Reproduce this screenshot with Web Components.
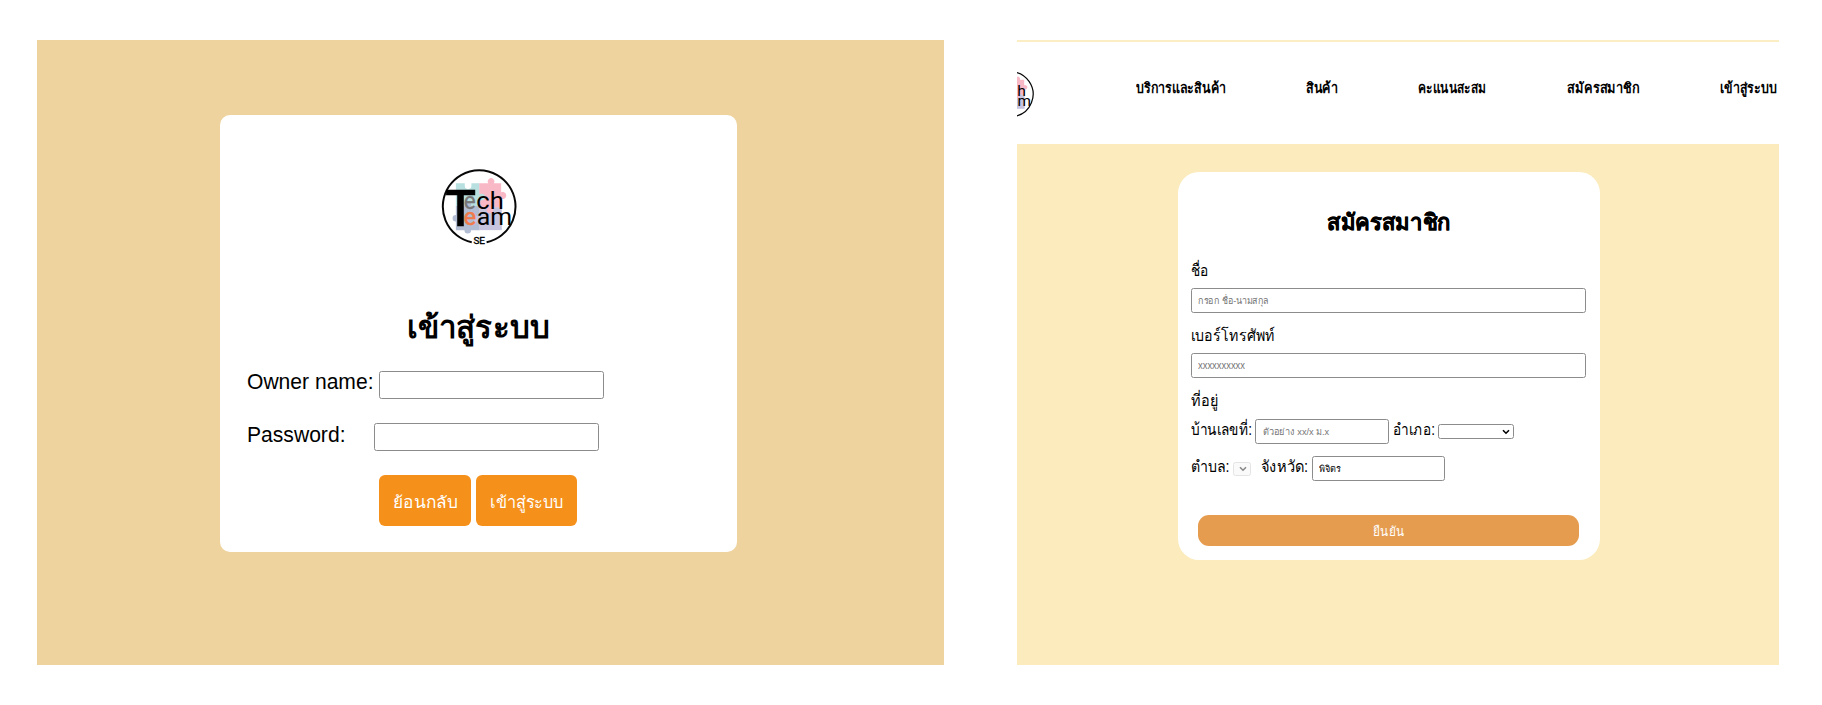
<!DOCTYPE html>
<html lang="th">
<head>
<meta charset="utf-8">
<title>Tech Team</title>
<style>
html,body{margin:0;padding:0;background:#fff}
body{width:1822px;height:705px;overflow:hidden;font-family:"Liberation Sans",sans-serif;color:#000}
</style>
</head>
<body>
<app-page></app-page>
<script>
const define = (name, html, ready) => {
  const tpl = document.createElement('template');
  tpl.innerHTML = html;
  customElements.define(name, class extends HTMLElement {
    constructor() {
      super();
      this.attachShadow({mode: 'open'}).appendChild(tpl.content.cloneNode(true));
    }
    connectedCallback() { if (ready) ready.call(this); }
  });
};

/* Text set to a given advance width: w = width, s = font size, t = top offset */
define('fit-text', `<style>
:host{display:block;flex:none;white-space:nowrap}
span{display:inline-block;vertical-align:top;line-height:inherit;transform-origin:0 0}
</style><span><slot></slot></span>`, function () {
  const w = +this.getAttribute('w'), s = +this.getAttribute('s');
  this.style.fontSize = s + 'px';
  this.style.lineHeight = s + 'px';
  this.style.height = s + 'px';
  this.style.width = w + 'px';
  this.style.marginTop = (this.getAttribute('t') || 0) + 'px';
  const span = this.shadowRoot.querySelector('span');
  const natural = span.getBoundingClientRect().width;
  if (natural) span.style.transform = `scaleX(${w / natural})`;
});

/* Outlined control: text field or select */
define('form-box', `<style>
:host{display:flex;flex:none;box-sizing:border-box;border:1px solid #8c8c8c;border-radius:2.5px;background:#fff;align-items:flex-start}
:host([disabled]){border-color:#e4e4e4;background:#fafafa;color:#888}
svg{display:none;margin:auto 3px auto auto;width:8px;height:6px}
:host([select]) svg{display:block}
</style><slot></slot><svg viewBox="0 0 8 6"><path d="M1 1.2 4 4.2 7 1.2" fill="none" stroke="currentColor" stroke-width="1.6"/></svg>`);

define('action-button', `<style>
:host{display:flex;flex:none;box-sizing:border-box;justify-content:center;color:#fff;background:var(--fill)}
</style><slot></slot>`);

define('team-logo', `<style>
:host{display:block;flex:none;font-weight:400}
svg{display:block;width:100%;height:100%}
text{font-family:Roboto,sans-serif}
</style>
<svg viewBox="61 56 228 230">
<circle cx="175" cy="170" r="112" fill="#fff"/>
<path fill="#b9e0e1" d="M105 99h27v8a10 10 0 0 0 20 0v-8h25v71h-72z"/>
<path fill="#f9b8c5" d="M176 99h27a10 10 0 1 1 17 0h22v27a11 11 0 1 1 0 20v27h-66z"/>
<path fill="#b2bdd4" d="M105 168h72v73h-26a10 10 0 1 1-20 0h-26v-26a10 10 0 1 1 0-20z"/>
<path fill="#c6c4df" d="M176 172h68v69h-68z"/>
<circle cx="183" cy="141" r="10" fill="#b9e0e1"/><circle cx="208" cy="180" r="10" fill="#f9b8c5"/>
<circle cx="141" cy="163" r="10" fill="#b2bdd4"/><circle cx="170" cy="208" r="10" fill="#c6c4df"/>
<path d="M153 277.5A110 110 0 1 1 198 277.5" fill="none" stroke="#080808" stroke-width="6"/>
<text x="72" y="228" font-size="149" font-weight="500" stroke="#000" stroke-width="1.5" textLength="94" lengthAdjust="spacingAndGlyphs">T</text>
<g font-size="70">
<text x="129" y="178" textLength="36" lengthAdjust="spacingAndGlyphs" fill="#777" stroke="#777">e</text>
<text x="167" y="178" textLength="83" lengthAdjust="spacingAndGlyphs">ch</text>
<text x="129" y="226" textLength="37" lengthAdjust="spacingAndGlyphs" fill="#f17a4b" stroke="#f17a4b" stroke-width="2">e</text>
<text x="168" y="226" textLength="107" lengthAdjust="spacingAndGlyphs">am</text>
</g>
<text x="158" y="283" font-size="28" stroke="#000" textLength="35" lengthAdjust="spacingAndGlyphs">SE</text>
</svg>`);

define('login-panel', `<style>
:host{display:block;box-sizing:border-box;width:907px;height:625px;padding:75px 0 0 183px;background:#efd39e}
.card{box-sizing:border-box;width:516.5px;height:437px;background:#fff;border-radius:10px;padding-top:54px}
team-logo{width:76px;height:76px;margin:0 0 0 221px}
h1{margin:0;font-weight:700;padding-left:186.5px;height:71px;padding-top:54px}
.row{display:flex;align-items:flex-start;padding-left:27px;height:53px}
.actions{display:flex;gap:5px;padding-left:159px}
action-button{height:50.5px;border-radius:6px;--fill:#f5911b}
</style>
<div class="card">
<team-logo></team-logo>
<h1><fit-text w="143" s="31" t="12.5">เข้าสู่ระบบ</fit-text></h1>
<div class="row"><fit-text w="126.5" s="21.3" t="2">Owner name:</fit-text><form-box style="width:225px;height:28.5px;margin:.5px 0 0 5.5px"></form-box></div>
<div class="row" style="height:52px"><fit-text w="98.5" s="21.3" t="2">Password:</fit-text><form-box style="width:225px;height:28px;margin-left:28.5px"></form-box></div>
<div class="actions">
<action-button style="width:92px"><fit-text w="64" s="16.5" t="18.6">ย้อนกลับ</fit-text></action-button>
<action-button style="width:101px"><fit-text w="73" s="16.5" t="18.6">เข้าสู่ระบบ</fit-text></action-button>
</div>
</div>`);

define('site-nav', `<style>
:host{display:flex;box-sizing:border-box;height:104px;border-top:2px solid #fbeec4;background:#fff;overflow:hidden;font-weight:700;align-items:flex-start}
team-logo{width:47px;height:47px;margin:29px 0 0 -30px}
</style>
<team-logo></team-logo>
<fit-text w="90" s="14.5" t="38.8" style="margin-left:102px">บริการและสินค้า</fit-text>
<fit-text w="32" s="14.5" t="38.8" style="margin-left:80px">สินค้า</fit-text>
<fit-text w="68.5" s="14.5" t="38.8" style="margin-left:80px">คะแนนสะสม</fit-text>
<fit-text w="73" s="14.5" t="38.8" style="margin-left:80px">สมัครสมาชิก</fit-text>
<fit-text w="56.5" s="14.5" t="38.8" style="margin-left:80.5px">เข้าสู่ระบบ</fit-text>`);

define('signup-panel', `<style>
:host{display:block;width:762px;height:625px;background:#fbebbd;overflow:hidden}
.card{box-sizing:border-box;width:422.5px;height:388px;margin:28px 0 0 160.5px;padding:0 13.5px;background:#fff;border-radius:21px;display:flow-root}
h2{margin:0;height:90px;padding-left:135.5px;display:flow-root;-webkit-text-stroke:.4px #000}
.label{display:flex;align-items:flex-start;height:26px}
form-box{height:25px}
.full{width:395px;margin-bottom:14px}
.row{display:flex;align-items:flex-start}
.hint{color:#757575}
action-button{width:381px;height:31px;border-radius:11px;margin:34px 0 0 7px;--fill:#e59c4f}
</style>
<site-nav></site-nav>
<div class="card">
<h2><fit-text w="124" s="22.5" t="40">สมัครสมาชิก</fit-text></h2>
<div class="label"><fit-text w="18" s="16" t=".5">ชื่อ</fit-text></div>
<form-box class="full"><fit-text class="hint" w="71" s="9.5" t="7" style="margin-left:6px">กรอก ชื่อ-นามสกุล</fit-text></form-box>
<div class="label"><fit-text w="84" s="16" t=".5">เบอร์โทรศัพท์</fit-text></div>
<form-box class="full"><fit-text class="hint" w="47" s="10" t="7" style="margin-left:6px">xxxxxxxxxx</fit-text></form-box>
<div class="label" style="height:27px"><fit-text w="27" s="16" t=".5">ที่อยู่</fit-text></div>
<div class="row" style="height:37px"><fit-text w="61" s="16" t="2.5">บ้านเลขที่:</fit-text>
<form-box style="width:134px;margin-left:3px"><fit-text class="hint" w="66" s="9.5" t="6.7" style="margin-left:6.5px">ตัวอย่าง xx/x ม.x</fit-text></form-box>
<fit-text w="42" s="16" t="2.5" style="margin-left:3.5px">อำเภอ:</fit-text>
<form-box select style="width:76px;height:15px;margin:5px 0 0 3.5px"></form-box></div>
<div class="row"><fit-text w="38.5" s="16" t="2.5">ตำบล:</fit-text>
<form-box select disabled style="width:18px;height:14px;margin:6px 0 0 3.5px"></form-box>
<fit-text w="47" s="16" t="2.5" style="margin-left:10px">จังหวัด:</fit-text>
<form-box style="width:133px;margin-left:4px"><fit-text w="22" s="9.5" t="7.4" style="margin-left:6px">พิจิตร</fit-text></form-box></div>
<action-button><fit-text w="31" s="13" t="9.6">ยืนยัน</fit-text></action-button>
</div>`);

define('app-page', `<style>
:host{display:flex;align-items:flex-start;gap:73px;padding:40px 0 0 37px}
</style><login-panel></login-panel><signup-panel></signup-panel>`);
</script>
</body>
</html>
